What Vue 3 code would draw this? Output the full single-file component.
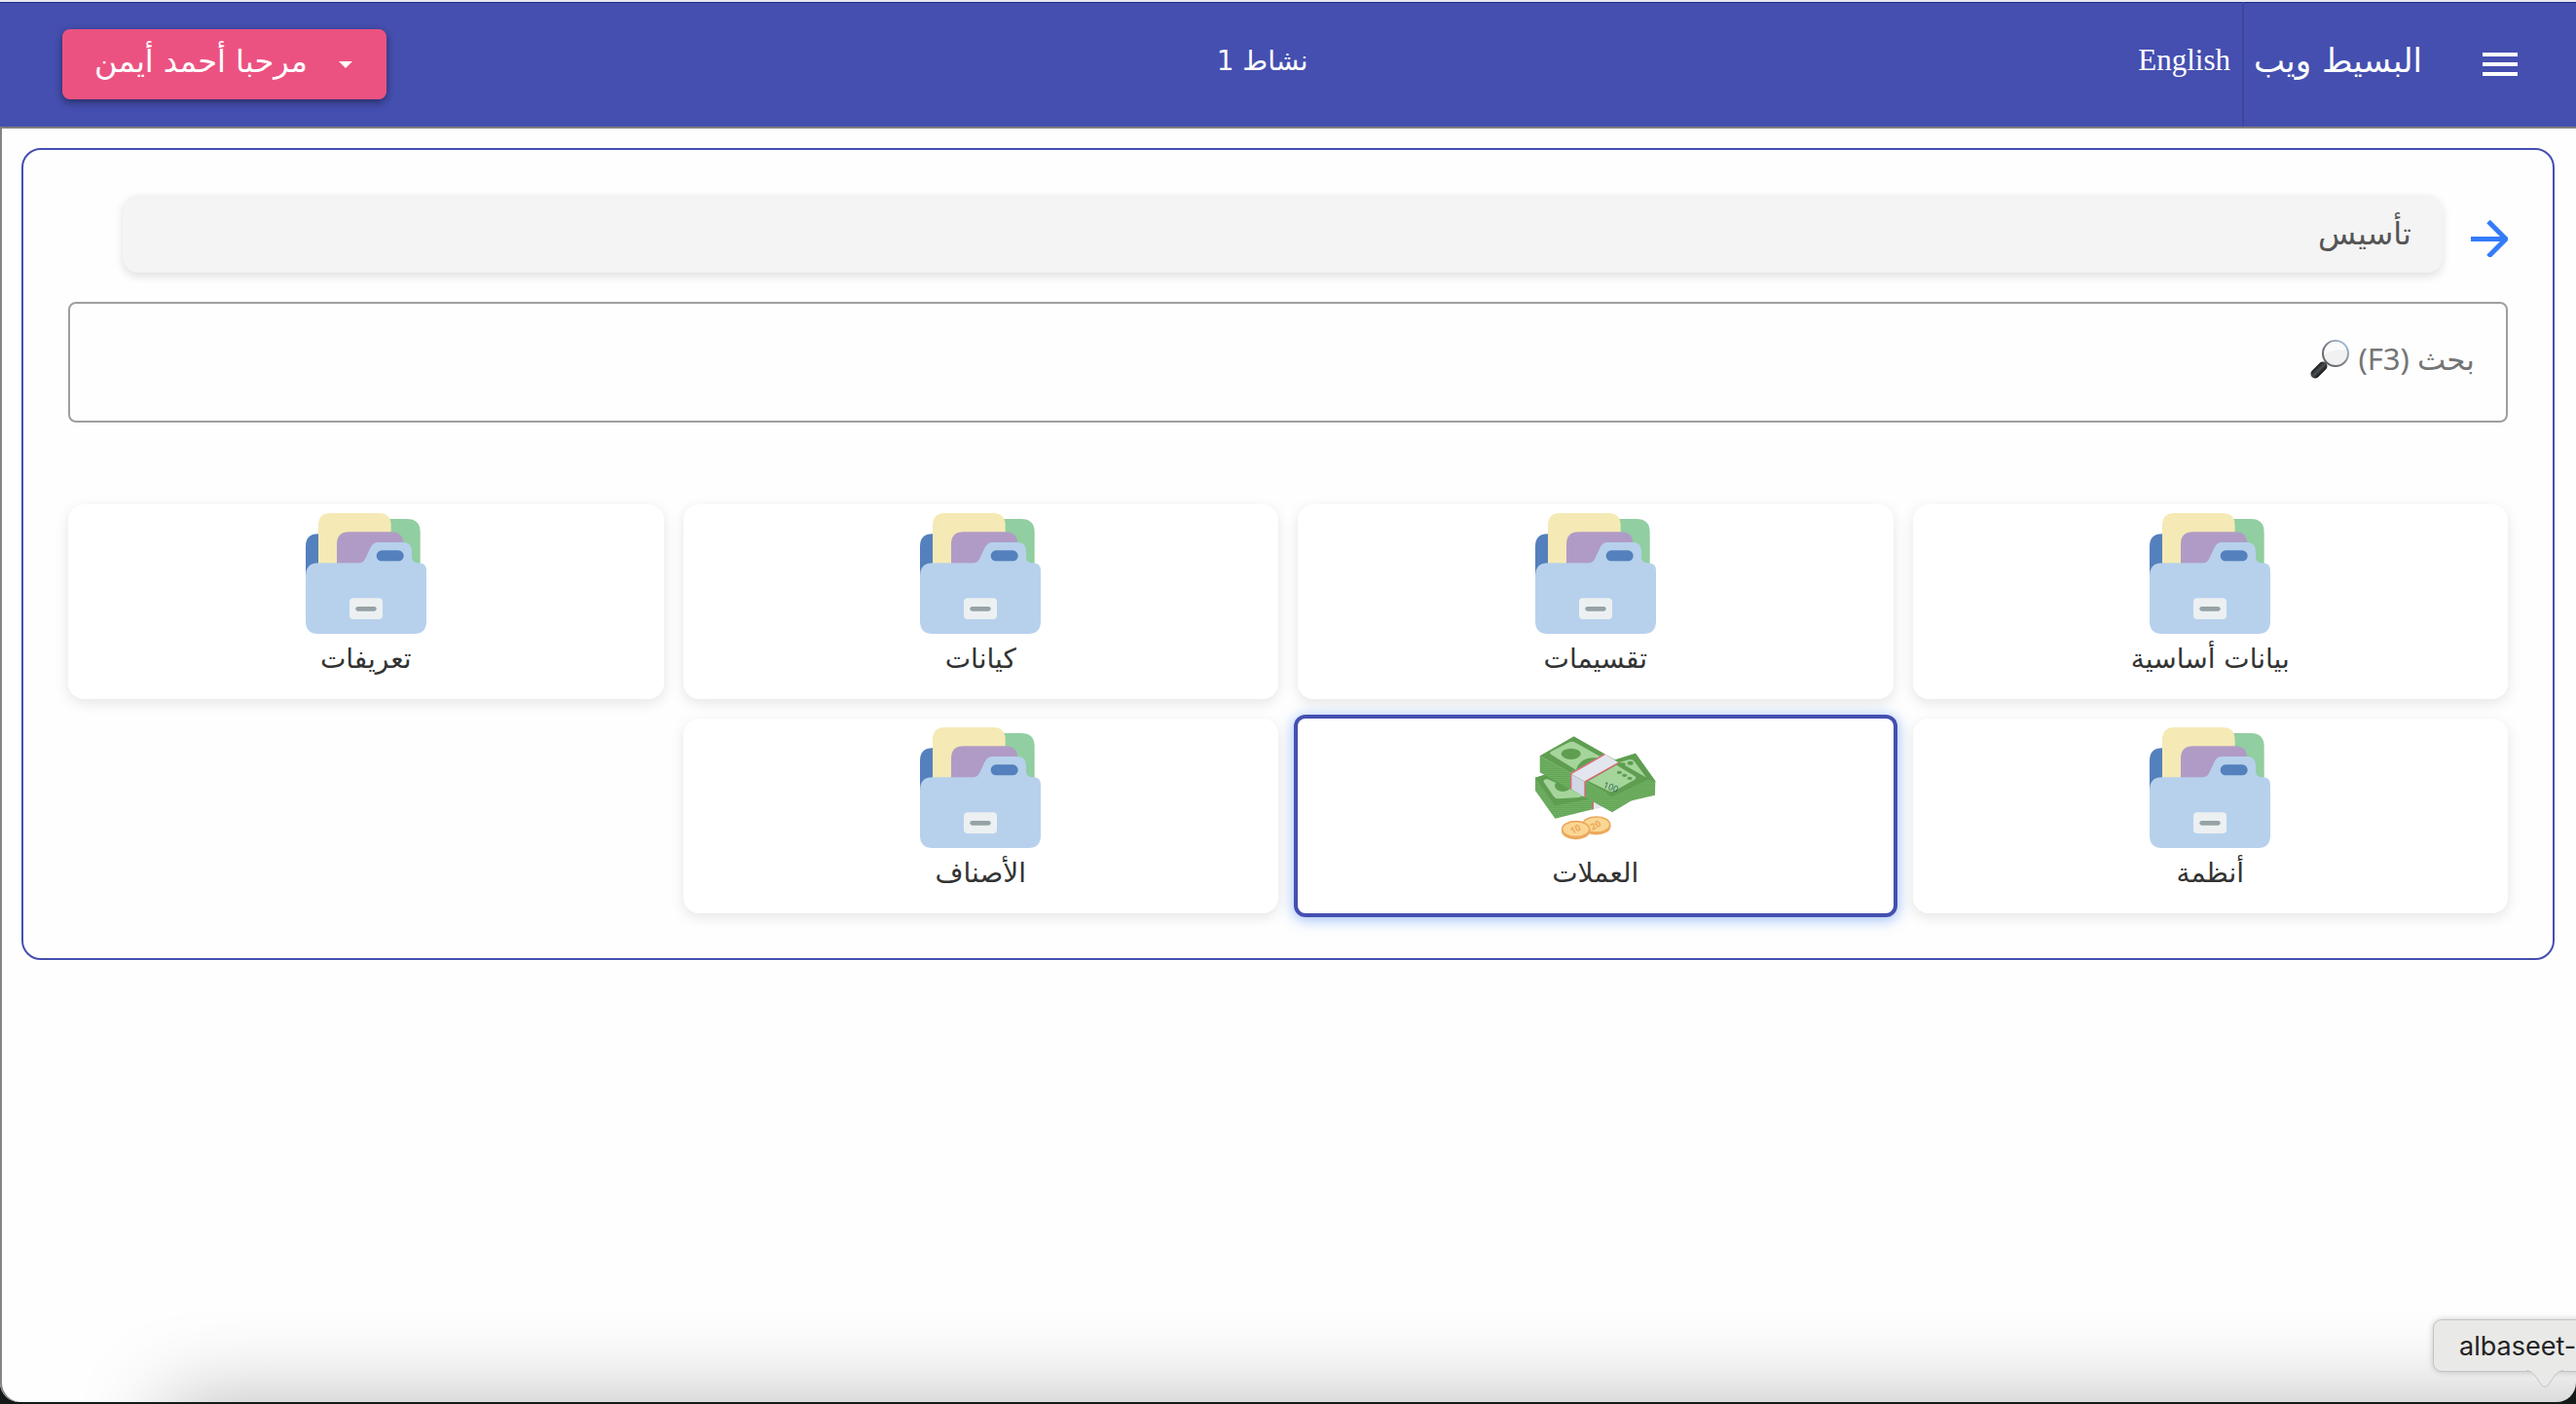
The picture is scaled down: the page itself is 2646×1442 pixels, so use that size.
<script setup>
import { ref } from 'vue'

const query = ref('')
const selected = ref('currencies')

const tiles = [
  { id: 'basic', label: 'بيانات أساسية' },
  { id: 'divisions', label: 'تقسيمات' },
  { id: 'entities', label: 'كيانات' },
  { id: 'definitions', label: 'تعريفات' },
  { id: 'systems', label: 'أنظمة' },
  { id: 'currencies', label: 'العملات', icon: 'money' },
  { id: 'items', label: 'الأصناف' },
]
</script>

<template>
  <div class="desktop">
    <div class="window" dir="rtl" lang="ar">
      <header class="topbar">
        <div class="start">
          <button class="menu" type="button" aria-label="القائمة">
            <svg viewBox="0 0 36 24" width="36" height="24" fill="#fff">
              <rect width="36" height="4" />
              <rect y="10" width="36" height="4" />
              <rect y="20" width="36" height="4" />
            </svg>
          </button>
          <a class="brand" href="#">البسيط ويب</a>
          <a class="lang" href="#" lang="en">English</a>
        </div>
        <span class="activity">نشاط 1</span>
        <button class="user" type="button">
          <svg viewBox="0 0 14 7" width="14" height="7"><path d="M0 0h14L7 7z" fill="#fff" /></svg>
          <span>مرحبا أحمد أيمن</span>
        </button>
      </header>

      <main class="panel">
        <div class="heading">
          <a class="back" href="#" aria-label="رجوع">
            <svg viewBox="0 0 38 38" width="38" height="38" fill="none" stroke="#347bfa" stroke-width="5">
              <path d="M0 19.500H35M18 1.500 36 19.500 18 37.500" />
            </svg>
          </a>
          <h1>تأسيس</h1>
        </div>

        <div class="search">
          <input v-model="query" type="text" placeholder="بحث (F3)" aria-label="بحث (F3)" />
          <svg v-if="!query" class="lens" viewBox="0 0 40 40" width="40" height="40">
            <defs>
              <linearGradient id="rim" x1="0" y1="1" x2="1" y2="0">
                <stop offset="0" stop-color="#55555a" />
                <stop offset=".6" stop-color="#8a8f98" />
                <stop offset="1" stop-color="#a9cdf5" />
              </linearGradient>
              <linearGradient id="grip" x1="0" y1="0" x2="1" y2="1">
                <stop offset="0" stop-color="#111" />
                <stop offset=".5" stop-color="#4a4f55" />
                <stop offset="1" stop-color="#050505" />
              </linearGradient>
            </defs>
            <path d="M13 27 17 23" stroke="#777" stroke-width="3" />
            <path d="M5 35 13 27" stroke="url(#grip)" stroke-width="9" stroke-linecap="round" />
            <circle cx="26" cy="14" r="13" fill="#f1f1f2" stroke="url(#rim)" stroke-width="2" />
            <path d="M15 15q8-6 22-4a11 11 0 0 0-22 4" fill="#fafafa" />
          </svg>
        </div>

        <div class="tiles">
          <button
            v-for="tile in tiles"
            :key="tile.id"
            type="button"
            class="tile"
            :class="{ active: tile.id === selected }"
            @click="selected = tile.id"
          >
            <svg v-if="tile.icon === 'money'" class="icon" viewBox="52 21 372 372">
              <defs>
                <pattern id="sheets" width="6" height="6" patternUnits="userSpaceOnUse">
                  <rect width="6" height="6" fill="#62a456" />
                  <path d="M0 2h6" stroke="#78b76b" stroke-width="2" />
                </pattern>
              </defs>
              <path d="M285 125 361 101 422 187 421 230 350 247 270 260z" fill="url(#sheets)" />
              <path d="M290 124 361 101 422 187 395 194 330 210z" fill="#5f9e51" />
              <path d="M300 132 340 121q12-3 18 6L397 180l-27 2z" fill="#a5d59b" />
              <ellipse cx="345" cy="131" rx="9" ry="6" fill="#5f9e51" />
              <ellipse cx="321" cy="135" rx="9" ry="5" fill="#5f9e51" />
              <path d="M52 176 90 164 250 225 232 273 113 302 52 216z" fill="url(#sheets)" />
              <path d="M52 176 90 164 220 226 228 240 112 262z" fill="#5f9e51" />
              <path d="M78 189q-3-9 12-8l110 48q-5 8-14 8l-60 4q-12 1-18-8z" fill="#a5d59b" />
              <ellipse cx="137" cy="201" rx="25" ry="18" fill="#5f9e51" />
              <path d="M228 245h12v25l-12 5z" fill="#dc6673" />
              <path d="M232 245h30v22l-30 7z" fill="#e4e5ef" />
              <path d="M66 109 289 234 289 283 66 160z" fill="url(#sheets)" />
              <path d="M289 234 400 181 420 190 421 220 350 246 289 283z" fill="url(#sheets)" />
              <path d="M66 109 171 49 402 180 289 235z" fill="#5f9e51" />
              <path d="M101 105q-8-5 0-10l53-27q12-6 22 0l88 50-72 43z" fill="#a5d59b" />
              <path d="M178 150q15-40 65-35l15 5-68 40z" fill="#5f9e51" />
              <ellipse cx="162" cy="103" rx="30" ry="17" fill="#5f9e51" />
              <path d="M215 187 302 137 358 171q8 6 0 11l-60 34q-11 6-22 0z" fill="#a5d59b" />
              <g fill="#5f9e51">
                <ellipse cx="311" cy="160" rx="8" ry="5" />
                <ellipse cx="327" cy="169" rx="8" ry="5" />
                <ellipse cx="343" cy="178" rx="8" ry="5" />
              </g>
              <path d="M160 163 266 103 309 130 205 188z" fill="#e3e6ef" />
              <path d="M161 164 205 189V237L161 211z" fill="#d2d6e5" />
              <path d="M162 212V164L266 104M205 237V189L308 131" fill="none" stroke="#dc6673" stroke-width="4" />
              <text class="note" direction="ltr" transform="translate(260 206) rotate(20)">100</text>
              <g stroke="#eca95c" stroke-width="5" fill="#f9d793">
                <ellipse cx="240" cy="326" rx="42" ry="24" fill="#eca95c" />
                <ellipse cx="240" cy="321" rx="42" ry="24" />
                <ellipse cx="177" cy="340" rx="42" ry="24" fill="#eca95c" />
                <ellipse cx="177" cy="335" rx="42" ry="24" />
              </g>
              <text class="coin" direction="ltr" transform="translate(228 339) rotate(-28)">20</text>
              <text class="coin" direction="ltr" transform="translate(166 351) rotate(-28)">10</text>
            </svg>
            <svg v-else class="icon" viewBox="84 81 372 372">
              <path d="M84 280V184q0-39 39-39h40v135z" fill="#5480bd" />
              <path d="M300 99h96q41 0 41 41v120H300z" fill="#91cea1" />
              <path d="M123 250V119q0-38 38-38h148q38 0 38 38v131z" fill="#f5e9b5" />
              <path d="M180 250V177q0-38 38-38h129q38 0 38 38v73z" fill="#b09bc6" />
              <path
                d="M84 275q0-40 39-40h125q13 0 19-12l17-36q7-16 24-16h75q28 0 28 28v18q0 18 23 18 22 0 22 24v155q0 39-39 39H123q-39 0-39-39z"
                fill="#b7d1ec"
              />
              <rect x="302" y="196" width="84" height="33" rx="16" fill="#5480bd" />
              <rect x="219" y="343" width="102" height="65" rx="12" fill="#ecf0f1" />
              <rect x="238" y="369" width="64" height="14" rx="7" fill="#95a2a6" />
            </svg>
            <span>{{ tile.label }}</span>
          </button>
        </div>
      </main>
    </div>

    <div class="dock-tip" dir="ltr">
      <span>albaseet-</span>
      <svg class="tail" viewBox="0 0 38 20" width="38" height="20">
        <path d="M0 0q5 1 9 6l7 10q3 3 6 0l7-10q4-5 9-6" fill="#e9e9e8" stroke="#c4c4c6" />
      </svg>
    </div>
  </div>
</template>

<style>
body {
  background: #141a18;
}
</style>

<style scoped>
* {
  box-sizing: border-box;
}

.desktop {
  position: relative;
  display: flex;
  min-height: 100vh;
  padding-bottom: 2px;
  overflow: hidden;
  background: #141a18;
  font-family: "DejaVu Sans", sans-serif;
}

.window {
  position: relative;
  flex: 1;
  overflow: hidden;
  border-top: 2px solid #e8e8ee;
  border-radius: 0 0 20px 20px;
  background: #fefefe;
  box-shadow: inset 2px 0 #858585;
}

/* Shade cast on the lower edge of the window */
.window::after {
  content: "";
  position: absolute;
  inset: auto -160px -100px 170px;
  height: 100px;
  box-shadow: 0 0 90px rgba(0, 0, 0, 0.28);
}

.topbar {
  display: flex;
  align-items: center;
  justify-content: space-between;
  height: 130px;
  padding: 0 60px 0 64px;
  border-bottom: 2px solid #808080;
  background: #454fb0;
  box-shadow: inset 0 1px #1c2a8c;
  color: #fff;
}

.start {
  display: flex;
  align-items: center;
  align-self: stretch;
}

.menu {
  display: flex;
  padding: 0;
  border: 0;
  background: none;
}

.brand,
.lang {
  display: flex;
  align-items: center;
  align-self: stretch;
  padding-bottom: 8px;
  color: #fff;
  text-decoration: none;
}

.brand {
  margin-right: 62px;
  padding-left: 10px;
  border-left: 2px solid #3c469f;
  font-size: 34px;
}

.lang {
  padding-right: 12px;
  font: 31px "Liberation Serif", serif;
}

.activity {
  padding-bottom: 8px;
  font-size: 28px;
}

.user {
  display: flex;
  align-items: center;
  gap: 32px;
  height: 72px;
  padding: 0 35px 6px 33px;
  border: 0;
  border-radius: 8px;
  background: #ec5281;
  box-shadow: 0 3px 8px rgba(0, 0, 0, 0.45);
  color: #fff;
  font: 32px "DejaVu Sans", sans-serif;
}

.user svg {
  margin-top: 6px;
}

.panel {
  margin: 20px 22px;
  padding: 46px;
  border: 2px solid #454fb0;
  border-radius: 20px;
}

.heading {
  display: flex;
  align-items: center;
  gap: 29px;
  padding-left: 56px;
}

.back {
  display: flex;
  padding-top: 10px;
}

h1 {
  flex: 1;
  height: 80px;
  margin: 0;
  padding: 0 32px;
  border-radius: 16px;
  background: #f4f4f4;
  box-shadow: 0 4px 10px rgba(0, 0, 0, 0.12);
  color: #555;
  font-size: 32px;
  font-weight: 400;
  line-height: 80px;
}

.search {
  position: relative;
  margin-top: 30px;
}

input {
  display: block;
  width: 100%;
  height: 124px;
  padding: 0 32px 8px;
  border: 2px solid #9e9e9e;
  border-radius: 8px;
  background: transparent;
  font: 31px "Noto Sans", "DejaVu Sans", sans-serif;
}

input::placeholder {
  color: #757575;
  opacity: 1;
}

.lens {
  position: absolute;
  top: 39px;
  right: 163px;
}

.tiles {
  display: grid;
  grid-template-columns: repeat(4, 1fr);
  gap: 20px;
  margin-top: 84px;
}

.tile {
  display: flex;
  flex-direction: column;
  align-items: center;
  height: 200px;
  padding: 9px 0 0;
  border: 0;
  border-radius: 16px;
  background: #fff;
  box-shadow: 0 4px 14px rgba(0, 0, 0, 0.1);
  color: #333;
  font: 28px/52px "DejaVu Sans", sans-serif;
}

.tile.active {
  border-radius: 8px;
  box-shadow: 0 0 0 4px #454fb0, 0 2px 14px 5px rgba(66, 133, 244, 0.5);
}

.icon {
  width: 124px;
  height: 124px;
}

.note {
  font: 27px "Open Sans", sans-serif;
  fill: #2f5f57;
}

.coin {
  font: bold 28px "Open Sans", sans-serif;
  fill: #eca95c;
}

.dock-tip {
  position: absolute;
  right: -60px;
  bottom: 33px;
  width: 207px;
  height: 54px;
  padding-left: 26px;
  border: 1px solid #c4c4c6;
  border-radius: 9px;
  background: #e9e9e8;
  box-shadow: 0 0 6px rgba(0, 0, 0, 0.2);
  color: #222;
  font: 27px/54px "Inter", sans-serif;
}

.tail {
  position: absolute;
  top: 51px;
  left: 95px;
}
</style>
